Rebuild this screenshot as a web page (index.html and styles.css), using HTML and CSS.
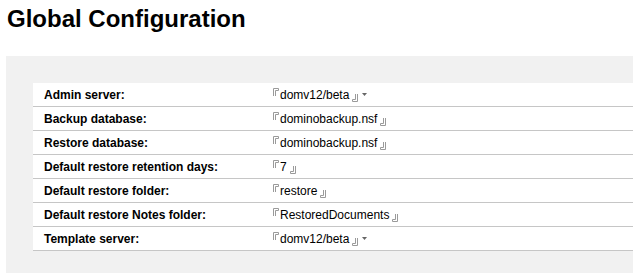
FILE: index.html
```html
<!DOCTYPE html>
<html>
<head>
<meta charset="utf-8">
<link rel="stylesheet" href="styles.css">
</head>
<body>
<h1 class="title">Global Configuration</h1>
<div class="panel">
  <table class="config">
    <tr><td class="label">Admin server:</td><td class="value"><span class="field"><svg class="br-open" width="6" height="8" viewBox="0 0 6 8"><path d="M0.5 8V0.5H5.5V2.5H2.5V8" fill="none" stroke="#9a9a9a" stroke-width="1"/></svg><span class="text">domv12/beta</span><svg class="br-close" width="6" height="8" viewBox="0 0 6 8"><path d="M5.5 0V7.5H0.5V5.5H3.5V0" fill="none" stroke="#9a9a9a" stroke-width="1"/></svg></span><svg class="caret" width="5" height="3" viewBox="0 0 5 3"><path d="M0 0H5L2.5 3Z" fill="#666"/></svg></td></tr>
    <tr><td class="label">Backup database:</td><td class="value"><span class="field"><svg class="br-open" width="6" height="8" viewBox="0 0 6 8"><path d="M0.5 8V0.5H5.5V2.5H2.5V8" fill="none" stroke="#9a9a9a" stroke-width="1"/></svg><span class="text">dominobackup.nsf</span><svg class="br-close" width="6" height="8" viewBox="0 0 6 8"><path d="M5.5 0V7.5H0.5V5.5H3.5V0" fill="none" stroke="#9a9a9a" stroke-width="1"/></svg></span></td></tr>
    <tr><td class="label">Restore database:</td><td class="value"><span class="field"><svg class="br-open" width="6" height="8" viewBox="0 0 6 8"><path d="M0.5 8V0.5H5.5V2.5H2.5V8" fill="none" stroke="#9a9a9a" stroke-width="1"/></svg><span class="text">dominobackup.nsf</span><svg class="br-close" width="6" height="8" viewBox="0 0 6 8"><path d="M5.5 0V7.5H0.5V5.5H3.5V0" fill="none" stroke="#9a9a9a" stroke-width="1"/></svg></span></td></tr>
    <tr><td class="label">Default restore retention days:</td><td class="value"><span class="field"><svg class="br-open" width="6" height="8" viewBox="0 0 6 8"><path d="M0.5 8V0.5H5.5V2.5H2.5V8" fill="none" stroke="#9a9a9a" stroke-width="1"/></svg><span class="text">7</span><svg class="br-close" width="6" height="8" viewBox="0 0 6 8"><path d="M5.5 0V7.5H0.5V5.5H3.5V0" fill="none" stroke="#9a9a9a" stroke-width="1"/></svg></span></td></tr>
    <tr><td class="label">Default restore folder:</td><td class="value"><span class="field"><svg class="br-open" width="6" height="8" viewBox="0 0 6 8"><path d="M0.5 8V0.5H5.5V2.5H2.5V8" fill="none" stroke="#9a9a9a" stroke-width="1"/></svg><span class="text">restore</span><svg class="br-close" width="6" height="8" viewBox="0 0 6 8"><path d="M5.5 0V7.5H0.5V5.5H3.5V0" fill="none" stroke="#9a9a9a" stroke-width="1"/></svg></span></td></tr>
    <tr><td class="label">Default restore Notes folder:</td><td class="value"><span class="field"><svg class="br-open" width="6" height="8" viewBox="0 0 6 8"><path d="M0.5 8V0.5H5.5V2.5H2.5V8" fill="none" stroke="#9a9a9a" stroke-width="1"/></svg><span class="text">RestoredDocuments</span><svg class="br-close" width="6" height="8" viewBox="0 0 6 8"><path d="M5.5 0V7.5H0.5V5.5H3.5V0" fill="none" stroke="#9a9a9a" stroke-width="1"/></svg></span></td></tr>
    <tr><td class="label">Template server:</td><td class="value"><span class="field"><svg class="br-open" width="6" height="8" viewBox="0 0 6 8"><path d="M0.5 8V0.5H5.5V2.5H2.5V8" fill="none" stroke="#9a9a9a" stroke-width="1"/></svg><span class="text">domv12/beta</span><svg class="br-close" width="6" height="8" viewBox="0 0 6 8"><path d="M5.5 0V7.5H0.5V5.5H3.5V0" fill="none" stroke="#9a9a9a" stroke-width="1"/></svg></span><svg class="caret" width="5" height="3" viewBox="0 0 5 3"><path d="M0 0H5L2.5 3Z" fill="#666"/></svg></td></tr>
  </table>
</div>
</body>
</html>
```
FILE: styles.css
```css
html, body {
  margin: 0;
  padding: 0;
  background: #ffffff;
  font-family: "Liberation Sans", Arial, sans-serif;
  color: #000;
}
.title {
  margin: 0;
  padding: 5px 0 0 7px;
  height: 56px;
  box-sizing: border-box;
  font-size: 24px;
  font-weight: bold;
  line-height: 28px;
}
.panel {
  margin-left: 6px;
  background: #f1f1f1;
  padding: 27px 0 22px 27px;
}
.config {
  width: 100%;
  border-collapse: collapse;
  background: #ffffff;
  font-size: 12px;
}
.config td {
  height: 23px;
  padding: 0;
  border-bottom: 1px solid #c6c6c6;
  vertical-align: middle;
}
.label {
  width: 229px;
  padding-left: 11px !important;
  font-weight: bold;
}
.value {
  padding-left: 0;
}
.field {
  display: inline-flex;
  align-items: center;
  vertical-align: middle;
}
.br-open {
  align-self: flex-start;
  margin-top: 0;
  margin-right: 1px;
}
.br-close {
  align-self: flex-end;
  margin-left: 3px;
}
.caret {
  margin-left: 4px;
  vertical-align: middle;
}
```
